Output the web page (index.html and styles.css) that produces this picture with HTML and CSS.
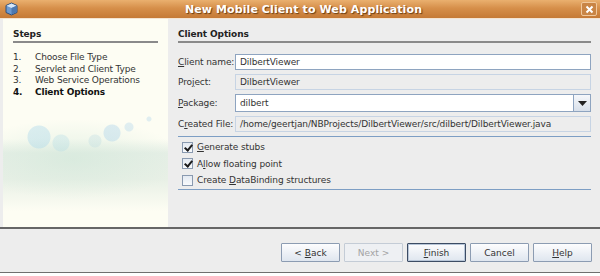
FILE: index.html
```html
<!DOCTYPE html>
<html lang="en">
<head>
    <meta charset="UTF-8">
    <title>New Mobile Client to Web Application</title>
    <link rel="stylesheet" href="styles.css">
</head>
<body>
<div class="window">
    <div class="titlebar">
        <svg class="app-icon" width="13" height="14" viewBox="0 0 13 14">
            <path d="M6.5 1 L12 3.5 L12 10.5 L6.5 13 L1 10.5 L1 3.5 Z" fill="#6d9ad0" stroke="#2e4f7a" stroke-width="1"/>
            <path d="M1.5 3.8 L6.5 6 L11.5 3.8 L6.5 1.5 Z" fill="#d6e6f7"/>
            <path d="M6.5 6 L6.5 12.5 L11.5 10.2 L11.5 3.8 Z" fill="#4c78b0"/>
        </svg>
        <span class="title">New Mobile Client to Web Application</span>
        <span class="close-btn">
            <svg width="9" height="9" viewBox="0 0 9 9">
                <path d="M1.5 1.5 L7.5 7.5 M7.5 1.5 L1.5 7.5" stroke="#fff" stroke-width="2"/>
            </svg>
        </span>
    </div>

    <div class="content">
        <div class="steps">
            <div class="section-title">Steps</div>
            <ol class="step-list">
                <li><span class="num">1.</span>Choose File Type</li>
                <li><span class="num">2.</span>Servlet and Client Type</li>
                <li><span class="num">3.</span>Web Service Operations</li>
                <li class="current"><span class="num">4.</span>Client Options</li>
            </ol>
        </div>

        <div class="panel">
            <div class="section-title">Client Options</div>

            <div class="form">
                <label class="label"><u>C</u>lient name:</label>
                <div class="field">DilbertViewer</div>

                <label class="label">Pro<u>j</u>ect:</label>
                <div class="field readonly">DilbertViewer</div>

                <label class="label"><u>P</u>ackage:</label>
                <div class="combo">
                    <div class="field combo-text">dilbert</div>
                    <span class="combo-btn">
                        <svg width="9" height="5" viewBox="0 0 9 5"><path d="M0 0 H9 L4.5 5 Z" fill="#222"/></svg>
                    </span>
                </div>

                <label class="label">C<u>r</u>eated File:</label>
                <div class="field readonly">/home/geertjan/NBProjects/DilbertViewer/src/dilbert/DilbertViewer.java</div>
            </div>

            <div class="options">
                <div class="check-row"><span class="check on"></span><span><u>G</u>enerate stubs</span></div>
                <div class="check-row"><span class="check on"></span><span>A<u>l</u>low floating point</span></div>
                <div class="check-row"><span class="check"></span><span>Create <u>D</u>ataBinding structures</span></div>
            </div>
        </div>
    </div>

    <div class="footer">
        <button class="btn">&lt; <u>B</u>ack</button>
        <button class="btn" disabled>Next &gt;</button>
        <button class="btn default"><u>F</u>inish</button>
        <button class="btn">Cancel</button>
        <button class="btn"><u>H</u>elp</button>
    </div>
</div>
</body>
</html>
```

FILE: styles.css
```css
body {
    margin: 0;
    background: #ffffff;
    font-family: "DejaVu Sans", sans-serif;
    font-size: 9px;
    color: #333333;
}
u {
    text-decoration: underline;
    text-underline-offset: 1px;
}
.window {
    width: 600px;
    height: 273px;
    background: #ededed;
    border-bottom: 1px solid #6f6f6f;
    box-sizing: border-box;
    display: flex;
    flex-direction: column;
}

/* Title bar */
.titlebar {
    height: 18px;
    flex: none;
    display: flex;
    align-items: center;
    padding: 0 3px 0 5px;
    background: linear-gradient(#eab06f, #d68f4a 45%, #c57a36);
    border-bottom: 1px solid #f4e4d2;
}
.app-icon {
    flex: none;
}
.title {
    flex: 1;
    text-align: center;
    font-weight: bold;
    font-size: 11px;
    letter-spacing: 0.1px;
    color: #ffffff;
    text-shadow: 1px 1px 1px #6b3d12;
    padding-left: 8px;
}
.close-btn {
    width: 14px;
    height: 12px;
    border: 1px solid #f0c89c;
    border-radius: 2px;
    background: #c98545;
    display: flex;
    align-items: center;
    justify-content: center;
}

/* Main area */
.content {
    height: 208px;
    flex: none;
    display: flex;
    border-bottom: 2px solid #666666;
    padding-left: 3px;
}
.steps {
    width: 145px;
    padding: 10px 10px 0 10px;
    background:
        radial-gradient(circle at 36px 118px, rgba(170, 215, 235, 0.4) 11px, transparent 12px),
        radial-gradient(circle at 58px 124px, rgba(180, 220, 230, 0.35) 8px, transparent 9px),
        radial-gradient(circle at 109px 114px, rgba(170, 210, 235, 0.4) 8px, transparent 9px),
        radial-gradient(circle at 126px 108px, rgba(170, 210, 235, 0.35) 4px, transparent 5px),
        radial-gradient(circle at 146px 100px, rgba(170, 210, 235, 0.35) 2px, transparent 3px),
        radial-gradient(circle at 92px 122px, rgba(190, 220, 225, 0.35) 6px, transparent 7px),
        radial-gradient(ellipse 110px 40px at 70px 140px, rgba(205, 230, 215, 0.5), transparent),
        linear-gradient(#fdfdf3 0, #fdfdf3 120px, #e6efe6 134px, #e8f0e6 160px, #fdfdf3 192px);
}
.section-title {
    font-weight: bold;
    color: #222222;
    line-height: 11px;
    padding-bottom: 1px;
    border-bottom: 2px solid #8a8a8a;
    letter-spacing: -0.1px;
}
.step-list {
    list-style: none;
    margin: 9px 0 0 0;
    padding: 0;
}
.step-list li {
    height: 11.7px;
    line-height: 11.7px;
    letter-spacing: -0.15px;
    white-space: nowrap;
}
.step-list .num {
    display: inline-block;
    width: 22px;
}
.step-list .current {
    font-weight: bold;
    color: #111111;
}

.panel {
    flex: 1;
    padding: 10px 9px 0 10px;
}
.form {
    display: grid;
    grid-template-columns: 57px 1fr;
    grid-template-rows: 16px 16px 18px 16px;
    row-gap: 4px;
    align-items: center;
    margin-top: 11px;
    padding-bottom: 4px;
    border-bottom: 1px solid #7d9ec4;
}
.label {
    white-space: nowrap;
    letter-spacing: -0.1px;
}
.field {
    height: 16px;
    box-sizing: border-box;
    border: 1px solid #8ea4c0;
    background: #ffffff;
    padding: 0 4px;
    line-height: 14px;
    white-space: nowrap;
    overflow: hidden;
    letter-spacing: -0.1px;
}
.field.readonly {
    background: #ededed;
    border-color: #c7d4e4;
}
.combo {
    display: flex;
    height: 18px;
}
.combo-text {
    flex: 1;
    height: 18px;
    line-height: 16px;
}
.combo-btn {
    width: 17px;
    height: 18px;
    box-sizing: border-box;
    border: 1px solid #8ea4c0;
    border-left: none;
    background: linear-gradient(#f6f8fb, #d8e0ea);
    display: flex;
    align-items: center;
    justify-content: center;
}

.options {
    padding: 2px 0 0 4px;
    border-bottom: 1px solid #7d9ec4;
}
.check-row {
    height: 16.5px;
    display: flex;
    align-items: center;
    letter-spacing: -0.1px;
}
.check {
    width: 11px;
    height: 11px;
    box-sizing: border-box;
    border: 1px solid #8a9ab0;
    background: linear-gradient(#e4eaf2, #f8fafc);
    margin-right: 4px;
    position: relative;
}
.check.on::after {
    content: "";
    position: absolute;
    left: 3px;
    top: 0px;
    width: 3px;
    height: 6px;
    border: solid #1c1c1c;
    border-width: 0 2px 2px 0;
    transform: rotate(40deg);
}

/* Buttons */
.footer {
    flex: 1;
    display: flex;
    justify-content: flex-end;
    align-items: flex-start;
    gap: 4px;
    padding: 14px 8px 0 0;
}
.btn {
    width: 59px;
    height: 19px;
    box-sizing: border-box;
    font-family: "DejaVu Sans", sans-serif;
    font-size: 9px;
    color: #333333;
    border: 1px solid #8c9cb2;
    border-radius: 1px;
    background: linear-gradient(#fdfdfe, #dfe6ef);
    padding: 0;
}
.btn[disabled] {
    color: #a3a3a3;
    border-color: #c4ccd6;
    background: #eef0f3;
}
.btn.default {
    border: 1px solid #3c4c64;
    box-shadow: inset 0 0 0 1px #b8c6d8;
}
```
